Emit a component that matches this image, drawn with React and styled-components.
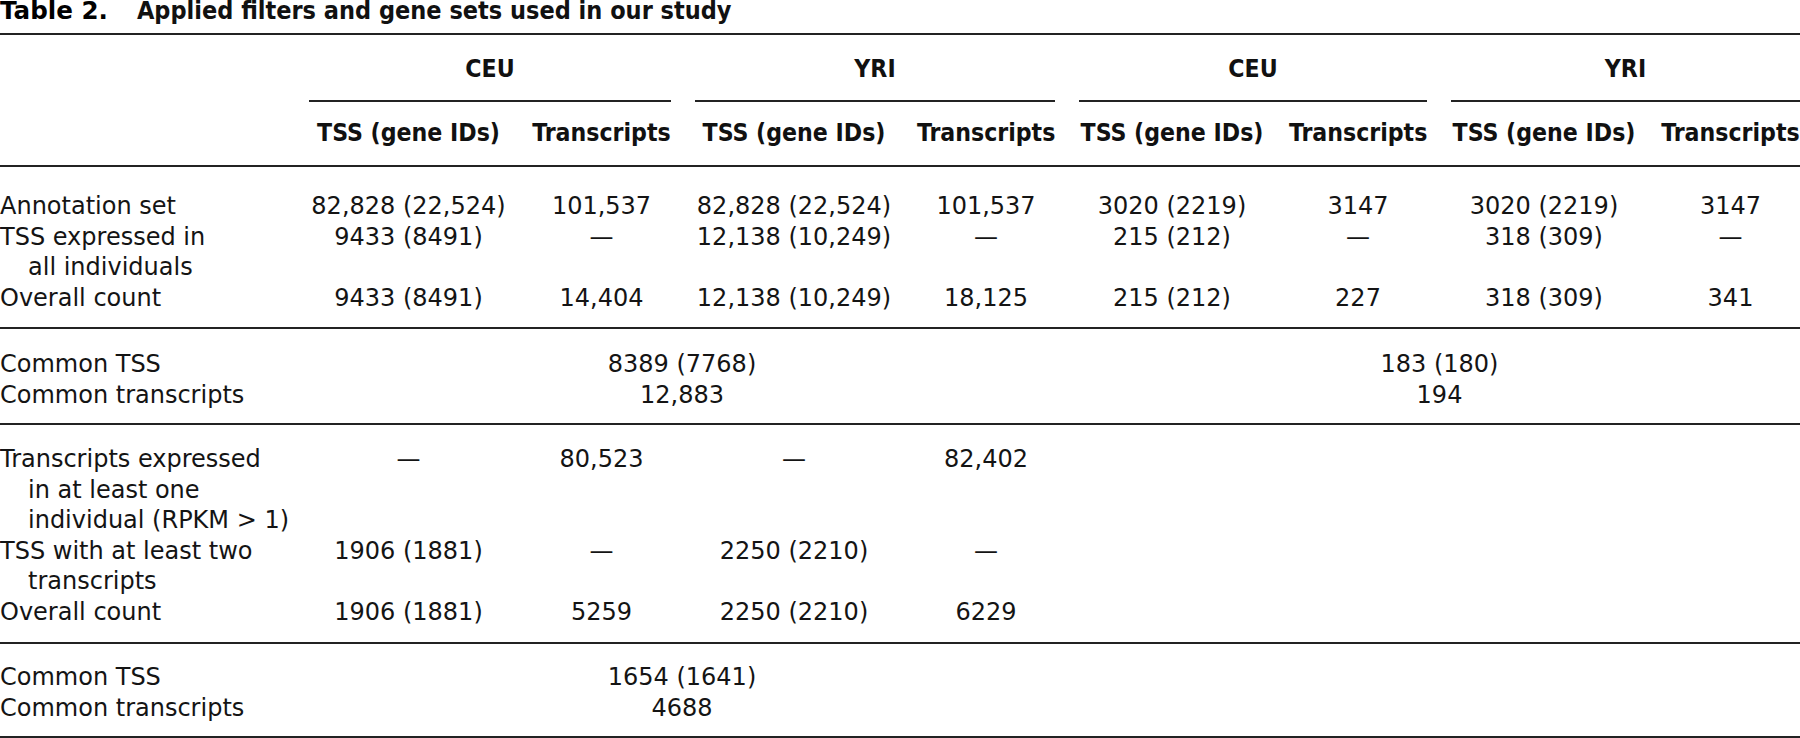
import React from "react";
import styled, { createGlobalStyle } from "styled-components";

const GlobalStyle = createGlobalStyle`
  html, body { margin: 0; padding: 0; background: #ffffff; }
  body {
    color: #141414;
    font-family: "DejaVu Sans", "Liberation Sans", sans-serif;
    font-size: 24px;
  }
`;

const COLUMNS = "285px 199px 139px 198px 138px 186px 138px 186px 139px";
const RULE = "2px solid #232323";

const Page = styled.div`
  width: 1800px;
  height: 738px;
  overflow: hidden;
`;

const Caption = styled.div`
  display: flex;
  align-items: baseline;
  gap: 29px;
  height: 33px;
  padding-top: 1px;
  box-sizing: border-box;
  line-height: 20px;
  white-space: nowrap;
`;

const CaptionLabel = styled.span`
  font-family: "DejaVu Sans", sans-serif;
  font-weight: 700;
  font-size: 24.6px;
  color: #000;
`;

const CaptionText = styled.span`
  font-family: "DejaVu Sans Condensed", "DejaVu Sans", sans-serif;
  font-weight: 700;
  font-size: 25px;
  color: #111;
`;

const Table = styled.div`
  border-top: ${RULE};
  border-bottom: ${RULE};
`;

const Head = styled.div`
  display: grid;
  grid-template-columns: ${COLUMNS};
  column-gap: 24px;
  padding-top: 19px;
  font-family: "DejaVu Sans Condensed", "DejaVu Sans", sans-serif;
  font-weight: 700;
  font-size: 24.6px;
  line-height: 30px;
  color: #111;
`;

const GroupHead = styled.div`
  grid-column: ${(p) => p.$col} / span 2;
  grid-row: 1;
  text-align: center;
  padding-bottom: 16px;
  border-bottom: ${RULE};
`;

const SubHead = styled.div`
  grid-column: ${(p) => p.$col};
  grid-row: 2;
  text-align: center;
  white-space: nowrap;
  padding: 16px 0 17px;
`;

const Section = styled.div`
  display: flex;
  flex-direction: column;
  padding-top: ${(p) => p.$top}px;
  padding-bottom: ${(p) => p.$bottom}px;
  border-top: ${RULE};
  line-height: 30.5px;
`;

const Row = styled.div`
  display: grid;
  grid-template-columns: ${COLUMNS};
  column-gap: 24px;
  align-items: start;
`;

const Label = styled.div`
  grid-column: 1;
  white-space: nowrap;
  padding-left: 28px;
  text-indent: -28px;
`;

const Cell = styled.div`
  text-align: center;
  white-space: nowrap;
`;

const SpanCell = styled(Cell)`
  grid-column: ${(p) => p.$col} / span 4;
`;

const groups = [
  { name: "CEU", col: 2 },
  { name: "YRI", col: 4 },
  { name: "CEU", col: 6 },
  { name: "YRI", col: 8 },
];

const D = "\u2014";

const section1 = [
  {
    label: ["Annotation set"],
    cells: ["82,828 (22,524)", "101,537", "82,828 (22,524)", "101,537", "3020 (2219)", "3147", "3020 (2219)", "3147"],
  },
  {
    label: ["TSS expressed in", "all individuals"],
    cells: ["9433 (8491)", D, "12,138 (10,249)", D, "215 (212)", D, "318 (309)", D],
  },
  {
    label: ["Overall count"],
    cells: ["9433 (8491)", "14,404", "12,138 (10,249)", "18,125", "215 (212)", "227", "318 (309)", "341"],
  },
];

const section3 = [
  {
    label: ["Transcripts expressed", "in at least one", "individual (RPKM > 1)"],
    cells: [D, "80,523", D, "82,402"],
  },
  {
    label: ["TSS with at least two", "transcripts"],
    cells: ["1906 (1881)", D, "2250 (2210)", D],
  },
  {
    label: ["Overall count"],
    cells: ["1906 (1881)", "5259", "2250 (2210)", "6229"],
  },
];

function LabelText({ lines }) {
  return (
    <Label>
      {lines.map((l, i) => (
        <React.Fragment key={i}>
          {i > 0 && <br />}
          {l}
        </React.Fragment>
      ))}
    </Label>
  );
}

function DataRows({ rows }) {
  return rows.map((r, i) => (
    <Row key={i}>
      <LabelText lines={r.label} />
      {r.cells.map((c, j) => (
        <Cell key={j}>{c}</Cell>
      ))}
    </Row>
  ));
}

function CommonRows({ tss, transcripts }) {
  return (
    <>
      <Row>
        <LabelText lines={["Common TSS"]} />
        {tss.map((v, i) => (
          <SpanCell key={i} $col={2 + i * 4}>{v}</SpanCell>
        ))}
      </Row>
      <Row>
        <LabelText lines={["Common transcripts"]} />
        {transcripts.map((v, i) => (
          <SpanCell key={i} $col={2 + i * 4}>{v}</SpanCell>
        ))}
      </Row>
    </>
  );
}

export default function App() {
  return (
    <>
      <GlobalStyle />
      <Page>
        <Caption>
          <CaptionLabel>Table 2.</CaptionLabel>
          <CaptionText>Applied filters and gene sets used in our study</CaptionText>
        </Caption>
        <Table>
          <Head>
            {groups.map((g, i) => (
              <GroupHead key={i} $col={g.col}>{g.name}</GroupHead>
            ))}
            {groups.map((g, i) => (
              <React.Fragment key={i}>
                <SubHead $col={g.col}>TSS (gene IDs)</SubHead>
                <SubHead $col={g.col + 1}>Transcripts</SubHead>
              </React.Fragment>
            ))}
          </Head>
          <Section $top={24} $bottom={14}>
            <DataRows rows={section1} />
          </Section>
          <Section $top={20} $bottom={13}>
            <CommonRows tss={["8389 (7768)", "183 (180)"]} transcripts={["12,883", "194"]} />
          </Section>
          <Section $top={19} $bottom={15}>
            <DataRows rows={section3} />
          </Section>
          <Section $top={18} $bottom={13}>
            <CommonRows tss={["1654 (1641)"]} transcripts={["4688"]} />
          </Section>
        </Table>
      </Page>
    </>
  );
}
